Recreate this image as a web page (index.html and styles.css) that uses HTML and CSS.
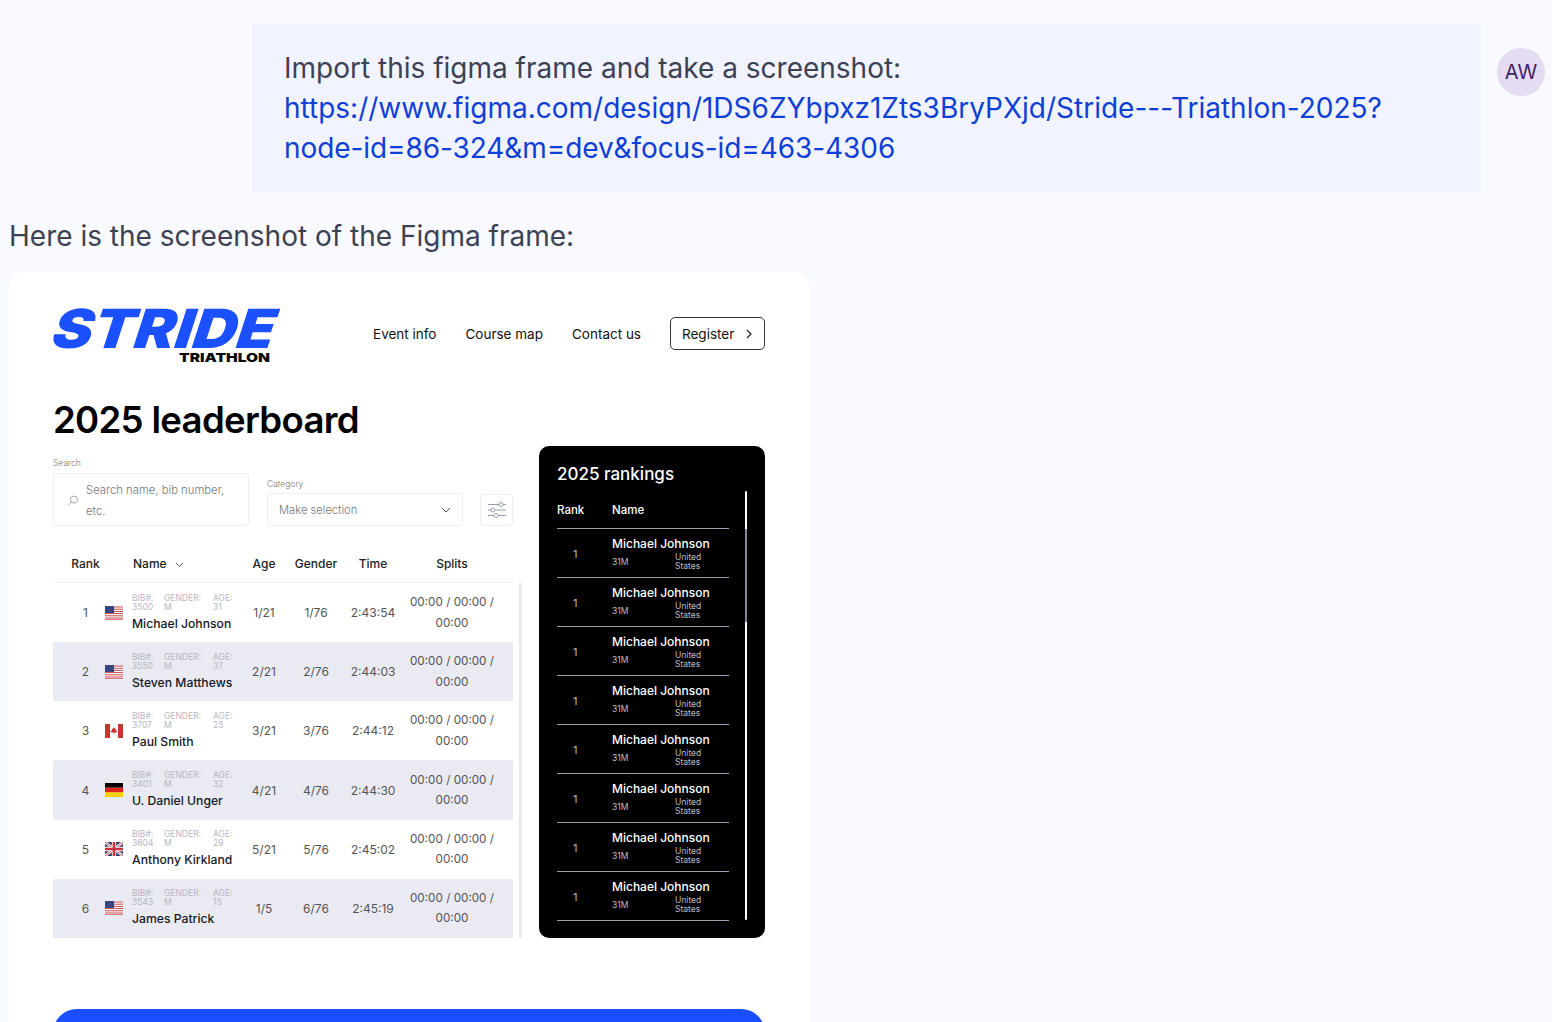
FILE: index.html
```html
<!DOCTYPE html>
<html lang="en">
<head>
<meta charset="utf-8">
<title>Stride</title>
<link rel="stylesheet" href="styles.css">
</head>
<body>
<main class="chat">
  <section class="user-row">
    <div class="bubble">Import this figma frame and take a screenshot:<br><a href="#">https://www.figma.com/design/1DS6ZYbpxz1Zts3BryPXjd/Stride---Triathlon-2025?<br><span class="tight">node-id=86-324&amp;m=dev&amp;focus-id=463-4306</span></a></div>
    <div class="avatar">AW</div>
  </section>
  <p class="reply">Here is the screenshot of the Figma frame:</p>
  <section class="shot">
    <header class="top">
      <svg class="logo" width="228" height="56" viewBox="0 0 228 56">
        <text class="logo-main" x="-5" y="39" textLength="222" lengthAdjust="spacingAndGlyphs">STRIDE</text>
        <text class="logo-sub" x="126" y="53" textLength="91" lengthAdjust="spacingAndGlyphs">TRIATHLON</text>
      </svg>
      <nav class="nav">
        <a href="#">Event info</a><a href="#">Course map</a><a href="#">Contact us</a>
        <span class="register">Register
          <svg width="8" height="10" viewBox="0 0 8 10"><path d="M2 1l4 4-4 4" class="ln-dark"/></svg>
        </span>
      </nav>
    </header>
    <h1>2025 leaderboard</h1>
    <div class="board">
      <div class="left">
        <div class="filters">
          <div class="f-search">
            <label>Search</label>
            <div class="box search-box">
              <svg width="14" height="14" viewBox="0 0 14 14"><circle cx="8.500" cy="5.500" r="3.800" class="ln"/><path d="M5.700 8.300L2 12" class="ln"/></svg>
              <span>Search name, bib number, etc.</span>
            </div>
          </div>
          <div class="f-cat">
            <label>Category</label>
            <div class="box cat-box"><span>Make selection</span>
              <svg width="10" height="6" viewBox="0 0 10 6"><path d="M1 1l4 4 4-4" class="ln-mid"/></svg>
            </div>
          </div>
          <div class="box tune">
            <svg width="20" height="20" viewBox="0 0 20 20"><path d="M1 4.500h11M16 4.500h3M1 10h3M8 10h11M1 15.500h6M11 15.500h8" class="ln"/><circle cx="14" cy="4.500" r="2" class="ln"/><circle cx="6" cy="10" r="2" class="ln"/><circle cx="9" cy="15.500" r="2" class="ln"/></svg>
          </div>
        </div>
        <div class="thead">
          <span class="c-rank">Rank</span><span class="c-gap"></span>
          <span class="c-name">Name <svg width="9" height="6" viewBox="0 0 9 6"><path d="M1 1l3.500 3.500L8 1" class="ln-mid"/></svg></span>
          <span>Age</span><span>Gender</span><span>Time</span><span>Splits</span>
        </div>
        <div class="tbody-wrap">
          <div class="tbody">
            <div class="row">
              <span class="c-rank">1</span>
              <svg class="flag" viewBox="0 0 18 14"><use href="#us"/></svg>
              <div class="who"><div class="meta"><span>BIB#:<br>3500</span><span>GENDER:<br>M</span><span>AGE:<br>31</span></div><b>Michael Johnson</b></div>
              <span>1/21</span><span>1/76</span><span>2:43:54</span><span class="splits">00:00 / 00:00 / 00:00</span>
            </div>
            <div class="row alt">
              <span class="c-rank">2</span>
              <svg class="flag" viewBox="0 0 18 14"><use href="#us"/></svg>
              <div class="who"><div class="meta"><span>BIB#:<br>3550</span><span>GENDER:<br>M</span><span>AGE:<br>37</span></div><b>Steven Matthews</b></div>
              <span>2/21</span><span>2/76</span><span>2:44:03</span><span class="splits">00:00 / 00:00 / 00:00</span>
            </div>
            <div class="row">
              <span class="c-rank">3</span>
              <svg class="flag" viewBox="0 0 18 14"><rect width="18" height="14" fill="#fff"/><rect width="5" height="14" fill="#c8352f"/><rect x="13" width="5" height="14" fill="#c8352f"/><path d="M9 3l1 2 1-.5-.4 2.500 1.400-.6.300 1-1.300 1.100H9.300V10H8.700V8.500H6.700L5.400 7.400l.3-1 1.400.6L6.700 4.500l1 .5z" fill="#c8352f"/></svg>
              <div class="who"><div class="meta"><span>BIB#:<br>3707</span><span>GENDER:<br>M</span><span>AGE:<br>25</span></div><b>Paul Smith</b></div>
              <span>3/21</span><span>3/76</span><span>2:44:12</span><span class="splits">00:00 / 00:00 / 00:00</span>
            </div>
            <div class="row alt">
              <span class="c-rank">4</span>
              <svg class="flag" viewBox="0 0 18 14"><rect width="18" height="4.700" fill="#000"/><rect y="4.700" width="18" height="4.700" fill="#d8261c"/><rect y="9.300" width="18" height="4.700" fill="#fbcf00"/></svg>
              <div class="who"><div class="meta"><span>BIB#:<br>3401</span><span>GENDER:<br>M</span><span>AGE:<br>32</span></div><b>U. Daniel Unger</b></div>
              <span>4/21</span><span>4/76</span><span>2:44:30</span><span class="splits">00:00 / 00:00 / 00:00</span>
            </div>
            <div class="row">
              <span class="c-rank">5</span>
              <svg class="flag" viewBox="0 0 18 14"><rect width="18" height="14" fill="#2b3566"/><path d="M0 0l18 14M18 0L0 14" stroke="#fff" stroke-width="2.600"/><path d="M0 0l18 14M18 0L0 14" stroke="#c8303c" stroke-width=".9"/><path d="M9 0v14M0 7h18" stroke="#fff" stroke-width="4.400"/><path d="M9 0v14M0 7h18" stroke="#c8303c" stroke-width="2.600"/></svg>
              <div class="who"><div class="meta"><span>BIB#:<br>3604</span><span>GENDER:<br>M</span><span>AGE:<br>29</span></div><b>Anthony Kirkland</b></div>
              <span>5/21</span><span>5/76</span><span>2:45:02</span><span class="splits">00:00 / 00:00 / 00:00</span>
            </div>
            <div class="row alt">
              <span class="c-rank">6</span>
              <svg class="flag" viewBox="0 0 18 14"><use href="#us"/></svg>
              <div class="who"><div class="meta"><span>BIB#:<br>3543</span><span>GENDER:<br>M</span><span>AGE:<br>15</span></div><b>James Patrick</b></div>
              <span>1/5</span><span>6/76</span><span>2:45:19</span><span class="splits">00:00 / 00:00 / 00:00</span>
            </div>
          </div>
          <div class="v-scroll"></div>
        </div>
      </div>
      <aside class="panel">
        <h2>2025 rankings</h2>
        <div class="panel-body">
          <div class="plist">
            <div class="phead"><span>Rank</span><span>Name</span></div>
            <div class="prow"><span class="pn">1</span><div class="pinfo"><b>Michael Johnson</b><div class="psub"><span>31M</span><span class="pc">United States</span></div></div></div>
            <div class="prow"><span class="pn">1</span><div class="pinfo"><b>Michael Johnson</b><div class="psub"><span>31M</span><span class="pc">United States</span></div></div></div>
            <div class="prow"><span class="pn">1</span><div class="pinfo"><b>Michael Johnson</b><div class="psub"><span>31M</span><span class="pc">United States</span></div></div></div>
            <div class="prow"><span class="pn">1</span><div class="pinfo"><b>Michael Johnson</b><div class="psub"><span>31M</span><span class="pc">United States</span></div></div></div>
            <div class="prow"><span class="pn">1</span><div class="pinfo"><b>Michael Johnson</b><div class="psub"><span>31M</span><span class="pc">United States</span></div></div></div>
            <div class="prow"><span class="pn">1</span><div class="pinfo"><b>Michael Johnson</b><div class="psub"><span>31M</span><span class="pc">United States</span></div></div></div>
            <div class="prow"><span class="pn">1</span><div class="pinfo"><b>Michael Johnson</b><div class="psub"><span>31M</span><span class="pc">United States</span></div></div></div>
            <div class="prow"><span class="pn">1</span><div class="pinfo"><b>Michael Johnson</b><div class="psub"><span>31M</span><span class="pc">United States</span></div></div></div>
          </div>
          <div class="p-scroll"><div class="p-thumb"></div></div>
        </div>
      </aside>
    </div>
    <div class="cta"></div>
  </section>
</main>
<svg class="defs" width="0" height="0">
  <symbol id="us" viewBox="0 0 18 14">
    <rect width="18" height="14" fill="#fff"/>
    <path d="M0 1h18M0 3.200h18M0 5.400h18M0 7.600h18M0 9.800h18M0 12h18M0 13.800h18" stroke="#c8494f" stroke-width="1"/>
    <rect width="9" height="7" fill="#3a4480"/>
  </symbol>
</svg>
</body>
</html>
```
FILE: styles.css
```css
* { box-sizing: border-box; }
html, body { margin: 0; height: 1022px; overflow: hidden; }
body { background: #f9faff; font-family: Inter, "Liberation Sans", sans-serif; color: #000; }
.chat { padding-top: 24px; }
.defs { position: absolute; }

.user-row { display: flex; align-items: flex-start; gap: 16px; padding-left: 252px; }
.bubble { width: 1229px; height: 168px; padding: 24px 32px; background: #f1f4fe; font-size: 28px; line-height: 40px; color: #3c4254; }
.bubble a { color: #0f3fd6; text-decoration: none; }
.tight { letter-spacing: -0.08px; }
.avatar { width: 48px; height: 48px; margin-top: 24px; border-radius: 50%; background: #e6dcf2; color: #3b2468; font-size: 20px; display: flex; align-items: center; justify-content: center; }
.reply { margin: 24px 0 16px 9px; font-size: 28px; line-height: 40px; color: #3c4254; }

.shot { width: 801px; height: 800px; margin-left: 9px; padding: 37px 45px 0 44px; background: #fff; border-radius: 16px; }
.top { display: flex; justify-content: space-between; height: 56px; }
.logo { display: block; overflow: visible; }
.logo-main { font-family: Inter, sans-serif; font-weight: 900; font-size: 54px; fill: #1b50ff; transform: skewX(-18deg); transform-origin: 0 39px; }
.logo-sub { font-family: Inter, sans-serif; font-weight: 900; font-size: 12px; fill: #0b0b0b; }
.nav { display: flex; align-items: center; height: 33px; margin-top: 8px; font-size: 13.500px; font-weight: 400; }
.nav a { color: #111; text-decoration: none; margin-right: 29px; }
.register { display: flex; align-items: center; gap: 11px; width: 95px; height: 33px; padding-left: 11px; border: 1px solid #333; border-radius: 5px; color: #111; }
.ln-dark { fill: none; stroke: #222; stroke-width: 1.200; }
.ln { fill: none; stroke: #9b9ea8; stroke-width: 1; }
.ln-mid { fill: none; stroke: #555; stroke-width: 1; }

h1 { margin: 31px 0 2px; font-size: 36.600px; line-height: 48px; font-weight: 600; letter-spacing: -0.7px; }
.board { display: flex; align-items: flex-start; gap: 17px; }
.left { width: 469px; }
.filters { display: flex; align-items: flex-end; padding-top: 12px; height: 80px; }
label { display: block; font-size: 8.500px; line-height: 10px; color: #777; margin-bottom: 5px; font-weight: 300; }
.f-cat label { margin-bottom: 4px; }
.box { border: 1px solid #eeeef2; border-radius: 3px; background: #fff; }
.f-search { width: 196px; }
.f-cat { width: 196px; margin-left: 18px; }
.search-box { height: 53px; display: flex; align-items: center; gap: 7px; padding: 2px 12px 0; font-size: 11.300px; line-height: 20.500px; color: #777; font-weight: 300; }
.cat-box { height: 33px; display: flex; align-items: center; justify-content: space-between; padding: 0 11px; font-size: 11.200px; color: #777; font-weight: 300; }
.tune { width: 33px; height: 32px; margin-left: 17px; display: flex; align-items: center; justify-content: center; }

.thead, .row { display: grid; grid-template-columns: 52px 18px 117px 48px 56px 58px 100px; align-items: center; width: 460px; text-align: center; }
.thead { height: 38px; padding-bottom: 1px; margin-top: 19px; font-size: 12px; font-weight: 500; color: #222; border-bottom: 1px solid #f0f0f3; }
.c-rank { width: 47px; padding-left: 18px; }
.c-name { text-align: left; padding-left: 10px; font-size: 12px; white-space: nowrap; }
.c-name svg { margin-left: 5px; }
.tbody-wrap { display: flex; gap: 6px; }
.tbody { width: 460px; }
.v-scroll { width: 3px; background: #e8e9ef; }
.row { height: 59.170px; font-size: 12px; color: #555; font-weight: 400; }
.row.alt { background: #e9eaf2; border-radius: 2px; }
.flag { width: 18px; height: 14px; display: block; }
.who { text-align: left; padding-left: 9px; margin-top: -1px; }
.meta { display: flex; font-size: 8.500px; line-height: 9px; color: #b6b8c0; }
.meta span:nth-child(1) { width: 32px; flex: none; }
.meta span:nth-child(2) { width: 49px; flex: none; }
.who b { display: block; margin-top: 4px; font-size: 12.200px; line-height: 15px; font-weight: 500; color: #16181f; white-space: nowrap; }
.splits { font-size: 11.700px; line-height: 20.500px; padding: 0 6px; }

.panel { width: 226px; height: 492px; background: #000; border-radius: 10px; padding: 16px 18px 0; color: #fff; }
h2 { margin: 0; font-size: 17px; line-height: 24px; font-weight: 500; }
.panel-body { display: flex; gap: 16px; margin-top: 5px; }
.plist { width: 172px; }
.phead { display: flex; height: 38px; padding-top: 12px; font-size: 11.500px; font-weight: 500; border-bottom: 1px solid #9b9ea8; }
.phead span:first-child { width: 55px; }
.prow { display: flex; height: 49px; border-bottom: 1px solid #9b9ea8; }
.pn { width: 55px; padding: 18px 0 0 16px; font-size: 11px; color: #bbb; }
.pinfo { width: 117px; padding-top: 8px; }
.pinfo b { display: block; font-size: 12px; line-height: 14px; font-weight: 500; white-space: nowrap; }
.psub { display: flex; align-items: center; margin-top: 2px; font-size: 8.500px; line-height: 9px; color: #bcbec6; }
.psub span:first-child { width: 63px; }
.pc { width: 30px; }
.p-scroll { width: 3px; height: 429px; background: #fff; padding-top: 38px; border-radius: 2px; }
.p-thumb { height: 93px; background: #83869a; }

.cta { height: 60px; margin-top: 71px; background: #1a4fff; border-radius: 24px; }
```
